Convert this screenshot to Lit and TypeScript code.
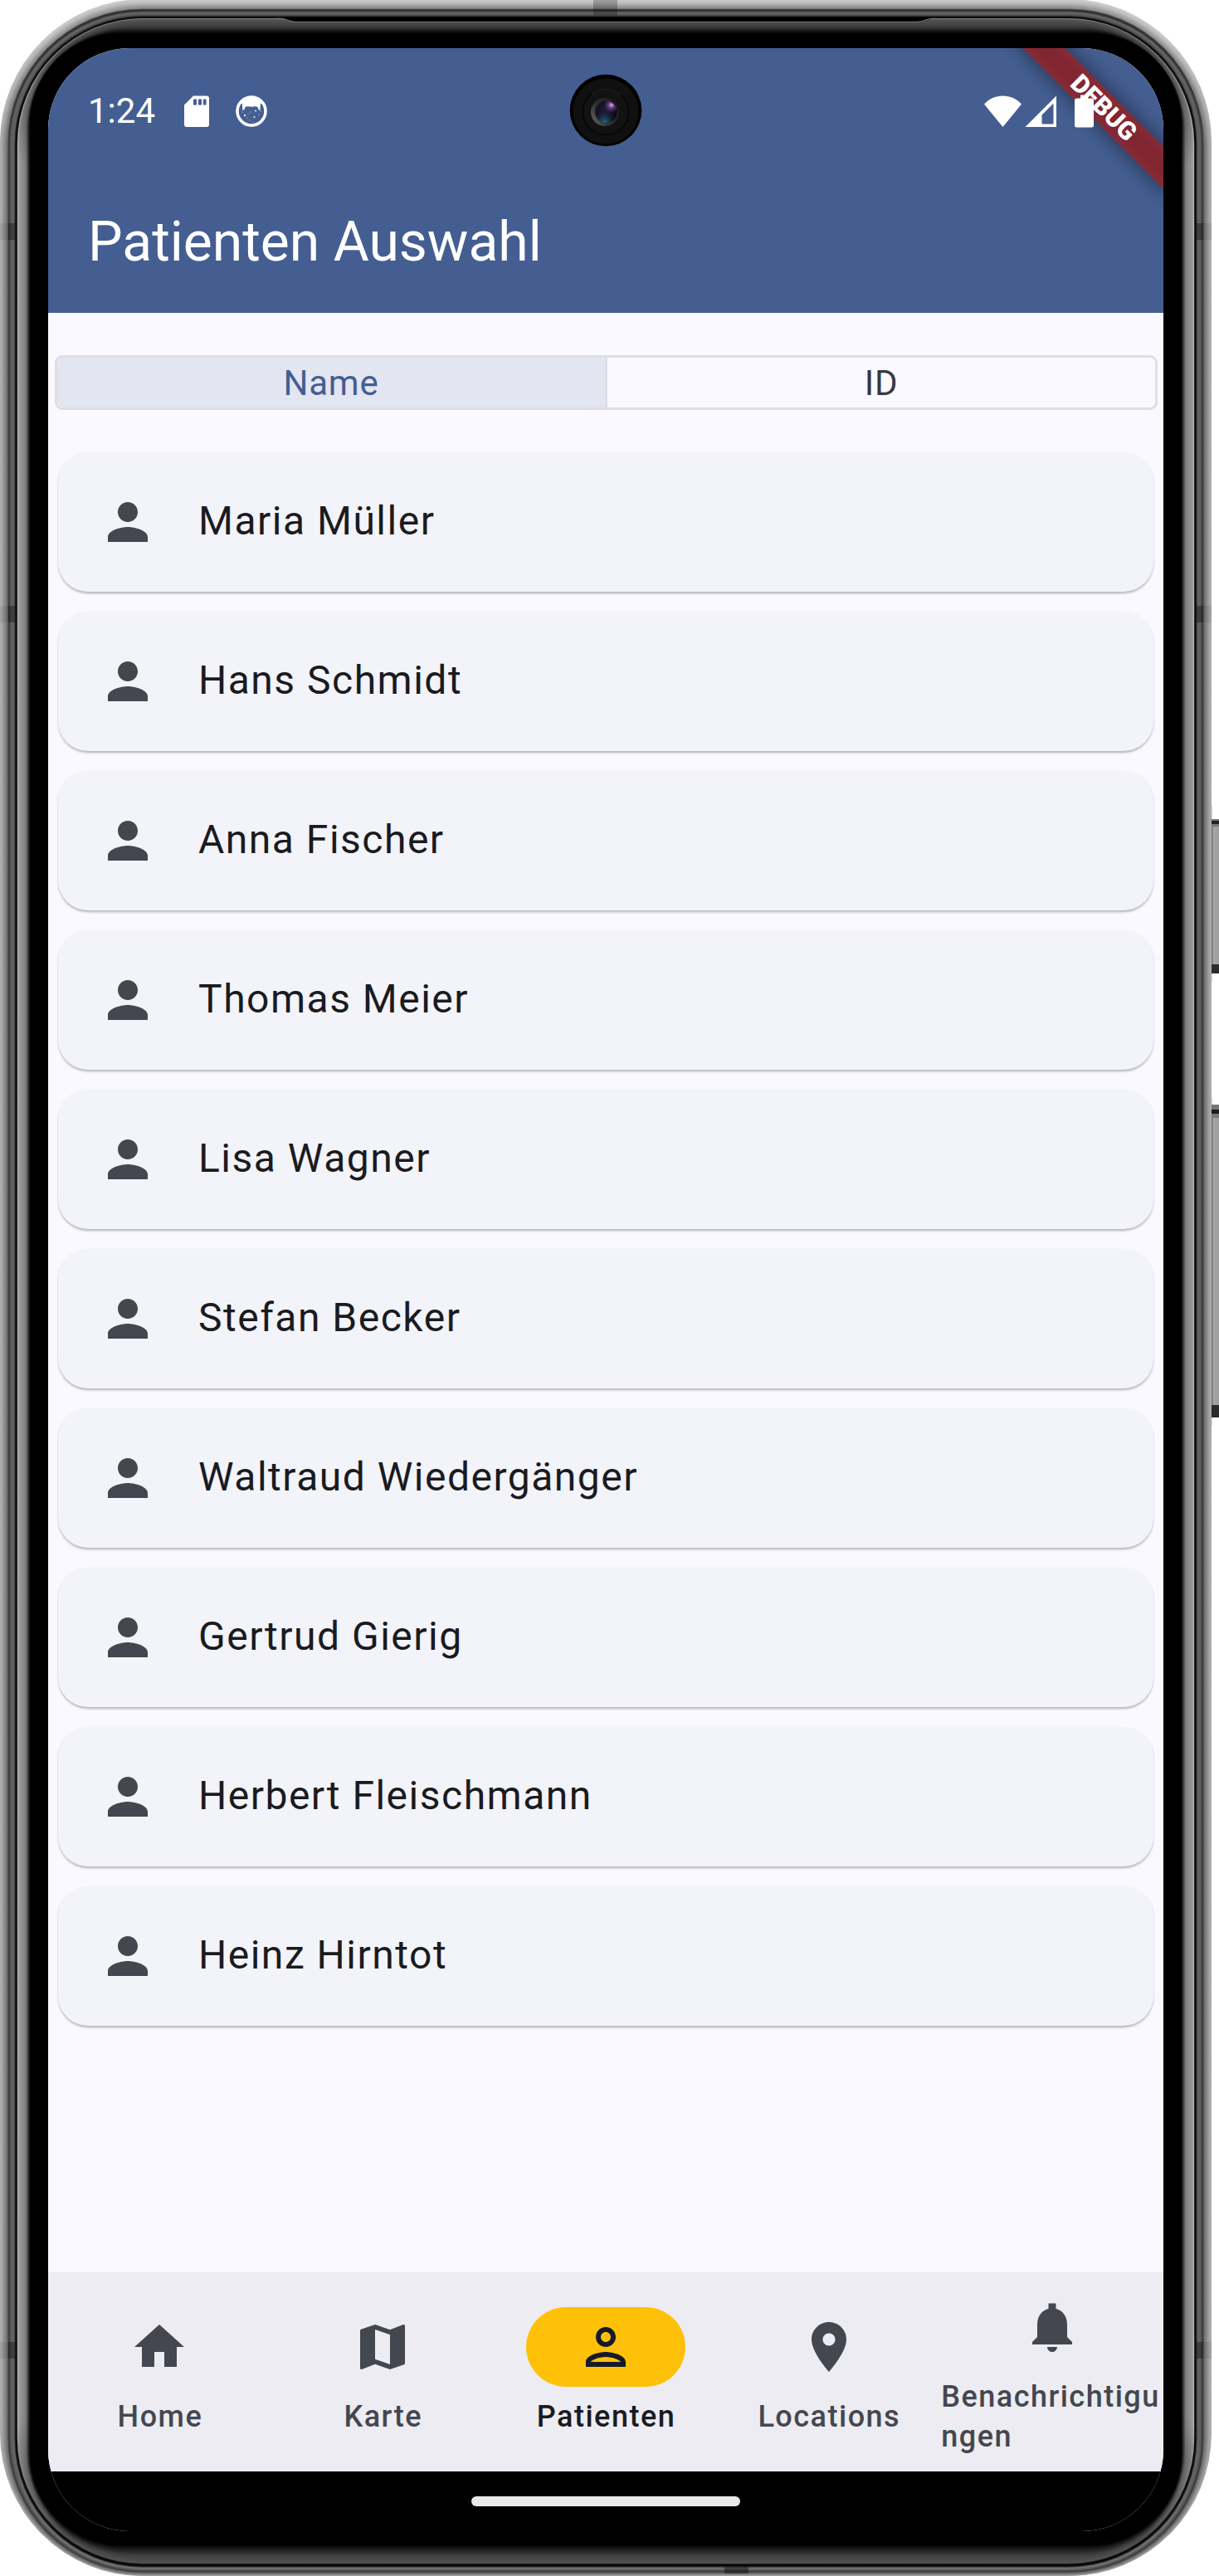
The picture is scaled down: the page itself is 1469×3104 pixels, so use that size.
import { LitElement, html, svg, css } from "lit";
import { customElement, property, state } from "lit/decorators.js";
import { classMap } from "lit/directives/class-map.js";

const ICONS: Record<string, string> = {
  person:
    "M12 12c2.21 0 4-1.79 4-4s-1.79-4-4-4-4 1.79-4 4 1.79 4 4 4zm0 2c-2.67 0-8 1.34-8 4v2h16v-2c0-2.66-5.33-4-8-4z",
  personOutline:
    "M12 6c1.1 0 2 .9 2 2s-.9 2-2 2-2-.9-2-2 .9-2 2-2m0 10c2.7 0 5.8 1.29 6 2H6c.23-.72 3.31-2 6-2m0-12C9.79 4 8 5.79 8 8s1.79 4 4 4 4-1.79 4-4-1.79-4-4-4zm0 10c-2.67 0-8 1.34-8 4v2h16v-2c0-2.66-5.33-4-8-4z",
  home: "M10 20v-6h4v6h5v-8h3L12 3 2 12h3v8z",
  map: "M20.5 3l-.16.03L15 5.1 9 3 3.36 4.9c-.21.07-.36.25-.36.48V20.5c0 .28.22.5.5.5l.16-.03L9 18.9l6 2.1 5.64-1.9c.21-.07.36-.25.36-.48V3.5c0-.28-.22-.5-.5-.5zM15 19l-6-2.11V5l6 2.11V19z",
  place:
    "M12 2C8.13 2 5 5.13 5 9c0 5.25 7 13 7 13s7-7.75 7-13c0-3.87-3.13-7-7-7zm0 9.5c-1.38 0-2.5-1.12-2.5-2.5s1.12-2.5 2.5-2.5 2.5 1.12 2.5 2.5-1.12 2.5-2.5 2.5z",
  bell: "M18 16v-5c0-3.07-1.63-5.64-4.5-6.32V2.5h-3v2.18C7.64 5.36 6 7.92 6 11v5l-2 2v1h16v-1l-2-2zm-6 6c1.1 0 2-.9 2-2h-4c0 1.1.89 2 2 2z",
};

@customElement("md-icon")
class MdIcon extends LitElement {
  @property() name = "";
  static styles = css`
    :host {
      display: block;
      width: 72px;
      height: 72px;
      flex: none;
    }
    .glyph {
      display: block;
      width: 100%;
      height: 100%;
      fill: currentColor;
    }
  `;
  render() {
    return html`<svg class="glyph" viewBox="0 0 24 24"><path d=${ICONS[this.name] ?? ""}></path></svg>`;
  }
}

/* One ring of the metal frame: insets, corner radius, and grey levels at top, sides and bottom. */
interface Ring {
  side: number;
  top: number;
  bottom: number;
  r: number;
  g: [number, number, number];
}

const RINGS: Ring[] = [
  { side: 0, top: -1, bottom: 0, r: 172, g: [205, 176, 165] },
  { side: 3, top: 3, bottom: 1.5, r: 169, g: [190, 160, 140] },
  { side: 9, top: 10, bottom: 4, r: 163, g: [135, 105, 90] },
  { side: 10, top: 11.5, bottom: 5, r: 161, g: [45, 58, 60] },
  { side: 11.5, top: 13.5, bottom: 6, r: 160, g: [60, 70, 70] },
  { side: 13, top: 15, bottom: 7, r: 159, g: [105, 94, 90] },
  { side: 17, top: 18, bottom: 9.5, r: 155, g: [80, 98, 120] },
  { side: 18, top: 20, bottom: 11, r: 154, g: [20, 30, 30] },
  { side: 20, top: 21.4, bottom: 13, r: 152, g: [0, 0, 0] },
  { side: 20.8, top: 22, bottom: 14, r: 151, g: [140, 185, 40] },
  { side: 22.5, top: 23.2, bottom: 15.5, r: 149, g: [85, 155, 82] },
  { side: 31, top: 32, bottom: 24, r: 128, g: [60, 125, 65] },
  { side: 36, top: 40, bottom: 37, r: 110, g: [0, 6, 0] },
  { side: 37, top: 41, bottom: 38, r: 108, g: [0, 0, 0] },
];

const W = 1460;
const H = 3104;

@customElement("phone-frame")
class PhoneFrame extends LitElement {
  static styles = css`
    :host {
      display: block;
    }
    .art {
      display: block;
      width: 1469px;
      height: 3104px;
    }
  `;

  private rings(): Ring[] {
    const out: Ring[] = [];
    for (let i = 0; i < RINGS.length - 1; i++) {
      const a = RINGS[i];
      const b = RINGS[i + 1];
      const n = Math.max(1, Math.ceil((b.top - a.top) * 1.5));
      for (let k = 0; k < n; k++) {
        const t = k / n;
        const mix = (x: number, y: number) => x + (y - x) * t;
        out.push({
          side: mix(a.side, b.side),
          top: mix(a.top, b.top),
          bottom: mix(a.bottom, b.bottom),
          r: mix(a.r, b.r),
          g: [mix(a.g[0], b.g[0]), mix(a.g[1], b.g[1]), mix(a.g[2], b.g[2])],
        });
      }
    }
    out.push(RINGS[RINGS.length - 1]);
    return out;
  }

  render() {
    const rings = this.rings();
    const grey = (v: number) => {
      const n = Math.round(v);
      return `rgb(${n},${n},${n})`;
    };
    return html`<svg class="art" viewBox="0 0 1469 3104">
      <defs>
        <linearGradient id="key" x1="0" y1="0" x2="1" y2="0">
          <stop offset="0" stop-color="#6e6e6e"></stop>
          <stop offset=".3" stop-color="#a6a6a6"></stop>
          <stop offset="1" stop-color="#9c9c9c"></stop>
        </linearGradient>
        ${rings.map(
          (q, i) => svg`<linearGradient id=${"g" + i} x1="0" y1="0" x2="0" y2="1">
            <stop offset="0.012" stop-color=${grey(q.g[0])}></stop>
            <stop offset="0.055" stop-color=${grey(q.g[1])}></stop>
            <stop offset="0.945" stop-color=${grey(q.g[1])}></stop>
            <stop offset="0.99" stop-color=${grey(q.g[2])}></stop>
          </linearGradient>`
        )}
      </defs>
      ${rings.map(
        (q, i) => svg`<rect x=${q.side} y=${q.top} width=${W - q.side * 2}
          height=${H - q.top - q.bottom} rx=${q.r} ry=${q.r} fill=${`url(#g${i})`}></rect>`
      )}
      <path d="M337 21 H1128 L1110 26 H355 Z" fill="#000"></path>
      <path d="M331 22.3 H338 C345 22.5 348 26.5 356 26.5 H1104 C1112 26.5 1116 22.5 1123 22.3 H1129"
        fill="none" stroke="#777" stroke-width="1"></path>
      <rect x="715" y="0" width="29" height="18.5" fill="#000" opacity=".22"></rect>
      <rect x="873" y="3093" width="29" height="8" fill="#111" opacity=".5"></rect>
      ${[269, 730, 2822].map(
        (y) => svg`
          <rect x="0" y=${y} width="10" height="20" fill="#000" opacity=".07"></rect>
          <rect x="10" y=${y} width="8" height="20" fill="#000" opacity=".34"></rect>
          <rect x="1442" y=${y} width="8" height="20" fill="#000" opacity=".34"></rect>
          <rect x="1450" y=${y} width="10" height="20" fill="#000" opacity=".07"></rect>`
      )}
      <rect x="1459" y="970" width="1.4" height="213" fill="#aaa"></rect>
      <rect x="1459" y="1323" width="1.4" height="395" fill="#aaa"></rect>
      <rect x="1460" y="987" width="9" height="186" fill="url(#key)"></rect>
      <rect x="1460" y="987" width="9" height="9" fill="#777"></rect>
      <rect x="1460" y="989" width="9" height="4" fill="#222"></rect>
      <rect x="1460" y="1162" width="9" height="11" fill="#2b2b2b"></rect>
      <rect x="1460" y="1331" width="9" height="377" fill="url(#key)"></rect>
      <rect x="1460" y="1331" width="9" height="16" fill="#777"></rect>
      <rect x="1460" y="1337" width="9" height="5" fill="#1c1c1c"></rect>
      <rect x="1460" y="1693" width="9" height="15" fill="#2b2b2b"></rect>
    </svg>`;
  }
}

@customElement("camera-hole")
class CameraHole extends LitElement {
  static styles = css`
    :host {
      display: block;
      width: 88px;
      height: 88px;
    }
    .art {
      display: block;
      width: 88px;
      height: 88px;
    }
  `;
  render() {
    return html`<svg class="art" viewBox="0 0 88 88">
      <defs>
        <linearGradient id="bezel" x1="0" y1=".85" x2="1" y2=".15">
          <stop offset="0" stop-color="#666"></stop>
          <stop offset=".35" stop-color="#333"></stop>
          <stop offset="1" stop-color="#161616"></stop>
        </linearGradient>
        <radialGradient id="lens" cx=".45" cy=".45" r=".6">
          <stop offset="0" stop-color="#241a38"></stop>
          <stop offset=".55" stop-color="#15122a"></stop>
          <stop offset="1" stop-color="#07060c"></stop>
        </radialGradient>
        <radialGradient id="violet" cx=".74" cy=".18" r=".36">
          <stop offset="0" stop-color="#e9b3f3"></stop>
          <stop offset=".35" stop-color="#8a50a0" stop-opacity=".8"></stop>
          <stop offset="1" stop-color="#50306a" stop-opacity="0"></stop>
        </radialGradient>
        <radialGradient id="teal" cx=".42" cy=".95" r=".5">
          <stop offset="0" stop-color="#2a6478"></stop>
          <stop offset="1" stop-color="#1c3a50" stop-opacity="0"></stop>
        </radialGradient>
      </defs>
      <circle cx="44" cy="44" r="43.3" fill="#000"></circle>
      <circle cx="44" cy="45" r="39.5" fill="#101010"></circle>
      <circle cx="44" cy="46" r="27.5" fill="#121212" stroke="#050505" stroke-width="1.6"></circle>
      <path d="M27 24.5 A27.5 27.5 0 0 1 62 25.5" fill="none" stroke="#222" stroke-width="1.2"></path>
      <circle cx="43" cy="46" r="17" fill="url(#bezel)"></circle>
      <circle cx="44.5" cy="46" r="13.2" fill="url(#lens)"></circle>
      <circle cx="44.5" cy="46" r="13.2" fill="url(#teal)"></circle>
      <circle cx="44.5" cy="46" r="13.2" fill="url(#violet)"></circle>
    </svg>`;
  }
}

@customElement("app-root")
class AppRoot extends LitElement {
  @state() private mode = "Name";
  @state() private tab = "Patienten";

  private patients = [
    "Maria Müller",
    "Hans Schmidt",
    "Anna Fischer",
    "Thomas Meier",
    "Lisa Wagner",
    "Stefan Becker",
    "Waltraud Wiedergänger",
    "Gertrud Gierig",
    "Herbert Fleischmann",
    "Heinz Hirntot",
  ];

  private tabs = [
    { icon: "home", label: "Home" },
    { icon: "map", label: "Karte" },
    { icon: "personOutline", label: "Patienten" },
    { icon: "place", label: "Locations" },
    { icon: "bell", label: "Benachrichtigungen" },
  ];

  static styles = css`
    :host {
      display: block;
      width: 1469px;
      height: 3104px;
      background: #fff;
      font-family: Roboto, "Liberation Sans", sans-serif;
    }
    .phone {
      position: relative;
      box-sizing: border-box;
      width: 1460px;
      height: 3104px;
      padding: 58px 58px 54px;
    }
    .frame {
      position: absolute;
      left: 0;
      top: 0;
    }
    .screen {
      position: relative;
      box-sizing: border-box;
      display: flex;
      flex-direction: column;
      height: 2992px;
      border-radius: 98px;
      overflow: hidden;
      background: #faf9ff;
      color: #1a1b20;
    }
    .header {
      flex: none;
      height: 319px;
      display: flex;
      flex-direction: column;
      background: #445e91;
      color: #fff;
    }
    .status {
      position: relative;
      z-index: 2;
      display: flex;
      align-items: center;
      height: 151px;
      padding: 0 84px 0 48px;
    }
    .clock {
      font-size: 42px;
      line-height: 48px;
      width: 116px;
    }
    .status svg {
      display: block;
      flex: none;
    }
    .github {
      margin-left: 32px;
    }
    .spacer {
      flex: 1;
    }
    .signal {
      margin-left: 4px;
    }
    .battery {
      margin-left: 22px;
    }
    .title {
      height: 168px;
      padding: 0 48px;
      font-size: 66px;
      line-height: 166px;
      white-space: nowrap;
    }
    .camera {
      position: absolute;
      left: 628px;
      top: 31px;
      z-index: 3;
    }
    .ribbon {
      position: absolute;
      z-index: 1;
      right: -57.9px;
      top: 54.1px;
      width: 260px;
      height: 36px;
      transform: rotate(45deg);
    }
    .ribbon-shadow,
    .ribbon-text {
      position: absolute;
      inset: 0;
    }
    .ribbon-shadow {
      background: rgba(0, 0, 0, 0.5);
      filter: blur(12px);
    }
    .ribbon-text {
      background: rgba(183, 28, 28, 0.627);
      color: #fff;
      font-size: 30.6px;
      line-height: 36px;
      font-weight: 900;
      text-align: center;
    }
    .toggle {
      flex: none;
      display: flex;
      box-sizing: border-box;
      height: 66px;
      margin: 51px 7.5px 0;
      border: 3px solid #dfdee4;
      border-radius: 9px;
      overflow: hidden;
    }
    .option {
      flex: 1;
      text-align: center;
      font-size: 42px;
      line-height: 62px;
      letter-spacing: 0.75px;
      color: #38393f;
      padding-left: 1px;
    }
    .option + .option {
      border-left: 3px solid #dfdee4;
    }
    .option.on {
      background: #e3e5f1;
      color: #445e91;
    }
    .list {
      flex: 1;
      display: flex;
      flex-direction: column;
      gap: 24px;
      padding: 51px 12px 0;
    }
    .card {
      flex: none;
      display: flex;
      align-items: center;
      box-sizing: border-box;
      height: 168px;
      padding: 0 48px;
      gap: 49px;
      border-radius: 36px;
      background: #f3f3fa;
      box-shadow: 0 3px 3px -1px rgba(0, 0, 0, 0.18), 0 2px 3px rgba(0, 0, 0, 0.1),
        0 1px 4px rgba(0, 0, 0, 0.04);
    }
    .card md-icon {
      color: #44474f;
    }
    .who {
      font-size: 48px;
      line-height: 72px;
      letter-spacing: 1.5px;
      white-space: nowrap;
      margin-top: -2px;
    }
    .nav {
      flex: none;
      display: grid;
      grid-template-columns: repeat(5, minmax(0, 1fr));
      align-items: center;
      height: 240px;
      background: #edecf2;
    }
    .item {
      display: flex;
      flex-direction: column;
      align-items: center;
      gap: 12px;
      color: #44474f;
    }
    .pill {
      display: flex;
      align-items: center;
      justify-content: center;
      width: 192px;
      height: 96px;
      border-radius: 48px;
    }
    .label {
      font-size: 36px;
      line-height: 48px;
      font-weight: 500;
      letter-spacing: 1.5px;
      word-break: break-all;
      padding-left: 1px;
    }
    .item.on {
      color: #1a1b20;
    }
    .item.on .pill {
      background: #ffc107;
      color: #151b2c;
    }
    .gesture {
      flex: none;
      display: flex;
      justify-content: center;
      align-items: flex-start;
      box-sizing: border-box;
      height: 72px;
      padding-top: 30px;
      background: #000;
    }
    .handle {
      width: 324px;
      height: 12px;
      border-radius: 6px;
      background: #eaeaea;
    }
  `;

  render() {
    return html`<div class="phone">
      <phone-frame class="frame"></phone-frame>
      <div class="screen">
        <div class="header">
          <div class="status">
            <span class="clock">1:24</span>
            <svg width="30" height="38" viewBox="0 0 30 38">
              <path
                fill="#fff"
                fill-rule="evenodd"
                d="M11 0.5H27a3 3 0 0 1 3 3V35a3 3 0 0 1-3 3H3a3 3 0 0 1-3-3V11.500zM11 4.500V11.500h4V4.500zM17 4.500V11.500h4V4.500zM23 4.500V11.500h3.500V4.500z"
              ></path>
            </svg>
            <svg class="github" width="38" height="38" viewBox="0 0 38 38">
              <circle cx="19" cy="19" r="17" fill="none" stroke="#fff" stroke-width="3.6"></circle>
              <path
                fill="#fff"
                d="M5 11C9 3 14 1 19 1s10 2 14 10l-3-1.500-.500 5.500 0 3-2-1-1-3c-2-1.500-4-.5-7.500-.5s-5.500-1-7.500.5l-1 3-2 1-.5-4L8 9.500z"
              ></path>
              ${[
                [11, 24, 1.2], [24, 18.5, 1.1], [22.5, 26, 1.1], [18, 20, 0.6], [14, 27, 0.6], [28, 23, 0.6],
                [17, 30, 0.6], [8, 20, 0.6], [30, 19, 0.6], [21, 32, 0.5], [15, 22, 0.5],
              ].map(([x, y, r]) => svg`<circle cx=${x} cy=${y} r=${r} fill="#dfe6f4"></circle>`)}
            </svg>
            <span class="spacer"></span>
            <svg width="45" height="38" viewBox="0 0 45 38">
              <path fill="#fff" d="M22.500 38 0 10.500C6 4 13.500 0.500 22.500 0.500S39 4 45 10.500z"></path>
            </svg>
            <svg class="signal" width="38" height="38" viewBox="0 0 38 38">
              <path fill="#fff" fill-rule="evenodd" d="M38 0.500V38.500H0zM34.500 9.500 20.500 23.500V34.500H34.500z"></path>
            </svg>
            <svg class="battery" width="23" height="40" viewBox="0 0 23 40">
              <path
                fill="#fff"
                d="M7 0.500H16V4.500H20.500A2.500 2.500 0 0 1 23 7V37A2.500 2.500 0 0 1 20.500 39.500H2.500A2.500 2.500 0 0 1 0 37V7A2.500 2.500 0 0 1 2.500 4.500H7z"
              ></path>
            </svg>
          </div>
          <div class="title">Patienten Auswahl</div>
        </div>
        <div class="toggle">
          ${["Name", "ID"].map(
            (m) => html`<div
              class=${classMap({ option: true, on: this.mode === m })}
              @click=${() => (this.mode = m)}
            >${m}</div>`
          )}
        </div>
        <div class="list">
          ${this.patients.map(
            (p) => html`<div class="card"><md-icon name="person"></md-icon><span class="who">${p}</span></div>`
          )}
        </div>
        <div class="nav">
          ${this.tabs.map(
            (t) => html`<div
              class=${classMap({ item: true, on: this.tab === t.label })}
              @click=${() => (this.tab = t.label)}
            >
              <div class="pill"><md-icon name=${t.icon}></md-icon></div>
              <div class="label">${t.label}</div>
            </div>`
          )}
        </div>
        <div class="gesture"><div class="handle"></div></div>
        <div class="ribbon">
          <div class="ribbon-shadow"></div>
          <div class="ribbon-text">DEBUG</div>
        </div>
        <camera-hole class="camera"></camera-hole>
      </div>
    </div>`;
  }
}
